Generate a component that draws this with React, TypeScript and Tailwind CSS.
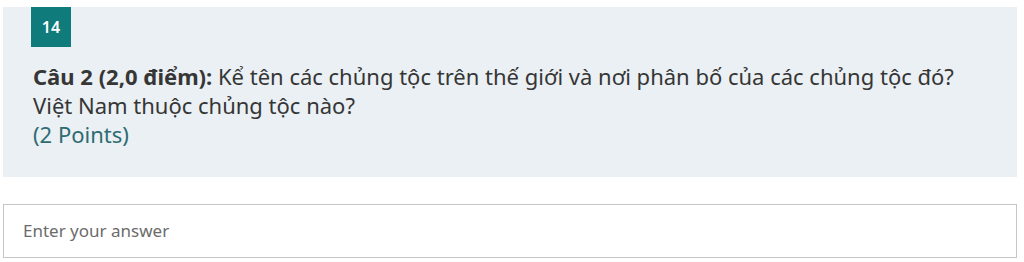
import React from 'react';

export default function App() {
  return (
    <div
      className="w-[1024px] h-[262px] bg-white px-[3px] pt-[7px] overflow-hidden"
      style={{ fontFamily: '"Noto Sans", "Open Sans", sans-serif' }}
    >
      {/* Question card */}
      <div className="w-[1014px] bg-[#eaf0f3] pl-[28px] pr-6 pb-[28px]">
        <div className="w-10 h-10 bg-[#0f7b7b] flex items-center justify-center text-white text-[16px] font-semibold">
          14
        </div>
        <div className="mt-[15px] pl-[2px] text-[22px] leading-[29px] text-[#363636]">
          <p>
            <span className="font-bold">Câu 2 (2,0 điểm):</span> Kể tên các chủng tộc trên thế giới và nơi phân bố của
            các chủng tộc đó?
          </p>
          <p>Việt Nam thuộc chủng tộc nào?</p>
          <p className="text-[#2f6b72]">(2 Points)</p>
        </div>
      </div>

      {/* Answer input */}
      <div className="mt-[27px] w-[1014px] h-[54px] border border-[#c6c6c6] flex items-center pl-[19px] pr-4">
        <input
          type="text"
          placeholder="Enter your answer"
          className="w-full bg-transparent text-[17px] text-[#333] placeholder:text-[#6b6b6b] focus:outline-none"
        />
      </div>
    </div>
  );
}
